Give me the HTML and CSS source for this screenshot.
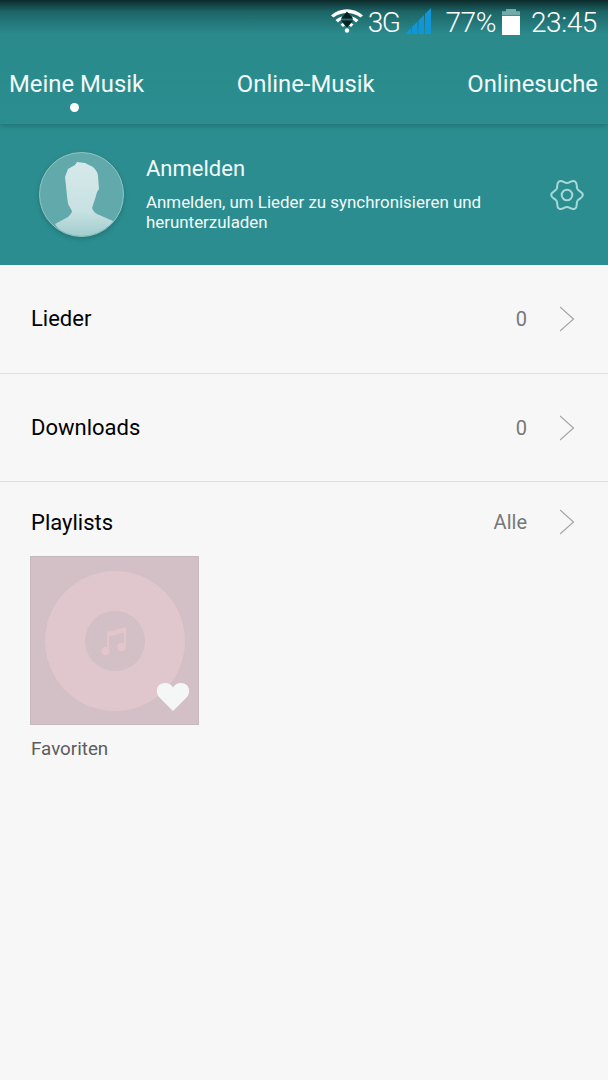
FILE: index.html
```html
<!DOCTYPE html>
<html lang="en">
<head>
    <meta charset="UTF-8">
    <meta name="viewport" content="width=device-width, initial-scale=1.0">
    <title>Meine Musik</title>
    <link rel="stylesheet" href="styles.css">
</head>
<body>
    <div class="app">
        <header class="top">
            <div class="status-bar">
                <svg class="wifi" width="34" height="26" viewBox="0 0 34 26">
                    <path d="M1 6.500 C10 -2 24 -2 33 6.500 L30.500 8.500 C23 2.500 11 2.500 3.500 8.500 Z" fill="#fff"/>
                    <path d="M5.500 11 C8 9 10 8 12 7.500 L11 11 C10 11.500 9 12.500 8 13.500 Z M28.500 11 C26 9 24 8 22 7.500 L23 11 C24 11.500 25 12.500 26 13.500 Z" fill="#fff"/>
                    <path d="M10.500 15.500 C11 15 12 14.500 13 14 L15 16.500 L13 18 Z M23.500 15.500 C23 15 22 14.500 21 14 L19 16.500 L21 18 Z" fill="#fff"/>
                    <circle cx="17" cy="21.500" r="2.200" fill="#fff"/>
                    <path d="M17 2.500 L23 9.500 H11 Z M11 11.500 H23 L17 18.500 Z" fill="#06201f"/>
                </svg>
                <span class="net">3G</span>
                <svg class="signal" width="28" height="28" viewBox="0 0 28 28">
                    <path d="M1 27 L7 21 V27 Z M8 27 V20 L13.500 14.500 V27 Z M14.500 27 V13.500 L20 8 V27 Z M21 27 V7 L27 1 V27 Z" fill="#0f95d8"/>
                </svg>
                <span class="pct">77%</span>
                <div class="battery"><div class="battery-cap"></div><div class="battery-body"></div></div>
                <span class="clock">23:45</span>
            </div>
            <nav class="tabs">
                <div class="tab active">Meine Musik</div>
                <div class="tab">Online-Musik</div>
                <div class="tab">Onlinesuche</div>
            </nav>
        </header>

        <section class="account">
            <div class="avatar">
                <svg width="84" height="84" viewBox="0 0 84 84">
                    <defs>
                        <linearGradient id="figure" x1="0" y1="0" x2="0" y2="1">
                            <stop offset="0" stop-color="#d6e9ea"/>
                            <stop offset="0.65" stop-color="#c8e1e2"/>
                            <stop offset="1" stop-color="#9fcbcc"/>
                        </linearGradient>
                    </defs>
                    <path d="M37 9 L45 10 L53 14 C56 17 58 20 58 23 L59 36 L57 39 C56 43 55 46 54 49 L52 55 C53 58 55 60 57 61 L73 68 L80 72 C72 80 56 85 42 85 C30 85 20 80 15 71 L28 64 C30 62 32 60 32 58 L28 51 L27 43 L26 33 L25 24 L28 16 L35 12 Z" fill="url(#figure)"/>
                </svg>
            </div>
            <div class="account-text">
                <div class="account-title">Anmelden</div>
                <div class="account-desc">Anmelden, um Lieder zu synchronisieren und herunterzuladen</div>
            </div>
            <svg class="gear" width="34" height="34" viewBox="-17 -17 34 34">
                <defs>
                    <path id="lobe" d="M10.390 -6 C11.890 -3.400 15.800 -3.500 15.800 0 C15.800 3.500 11.890 3.400 10.390 6" fill="none" stroke="#a9d8d8" stroke-width="2"/>
                </defs>
                <use href="#lobe"/>
                <use href="#lobe" transform="rotate(60)"/>
                <use href="#lobe" transform="rotate(120)"/>
                <use href="#lobe" transform="rotate(180)"/>
                <use href="#lobe" transform="rotate(240)"/>
                <use href="#lobe" transform="rotate(300)"/>
                <circle cx="0" cy="0" r="5.300" fill="none" stroke="#a9d8d8" stroke-width="2"/>
            </svg>
        </section>

        <main class="list">
            <div class="row row-first row-border">
                <span class="row-title">Lieder</span>
                <span class="row-value">0</span>
                <svg class="chevron" width="16" height="26" viewBox="0 0 16 26"><path d="M0 1 L13.500 13 L0 25" fill="none" stroke="#a8a4a4" stroke-width="1.200"/></svg>
            </div>
            <div class="row row-border">
                <span class="row-title">Downloads</span>
                <span class="row-value">0</span>
                <svg class="chevron" width="16" height="26" viewBox="0 0 16 26"><path d="M0 1 L13.500 13 L0 25" fill="none" stroke="#a8a4a4" stroke-width="1.200"/></svg>
            </div>
            <div class="row row-short">
                <span class="row-title">Playlists</span>
                <span class="row-value">Alle</span>
                <svg class="chevron" width="16" height="26" viewBox="0 0 16 26"><path d="M0 1 L13.500 13 L0 25" fill="none" stroke="#a8a4a4" stroke-width="1.200"/></svg>
            </div>
            <div class="playlist">
                <div class="cover">
                    <div class="disc">
                        <div class="disc-hole">
                            <svg width="60" height="60" viewBox="0 0 60 60">
                                <path d="M22 40 V21 L41 16 V36 H39 V21.500 L24 25.500 V40 Z" fill="#e2c6cc"/>
                                <circle cx="20.500" cy="40" r="4.300" fill="#e2c6cc"/>
                                <circle cx="36.500" cy="36" r="4.300" fill="#e2c6cc"/>
                            </svg>
                        </div>
                    </div>
                    <svg class="heart" width="34" height="30" viewBox="0 0 34 30">
                        <path d="M17 29 L3 15 C-1 10 0.500 1 9 1 C13 1 15.500 3 17 5.500 C18.500 3 21 1 25 1 C33.500 1 35 10 31 15 Z" fill="#f5f6f6"/>
                    </svg>
                </div>
                <div class="cover-label">Favoriten</div>
            </div>
        </main>
    </div>
</body>
</html>
```

FILE: styles.css
```css
* {
    margin: 0;
    padding: 0;
    box-sizing: border-box;
}

body {
    font-family: Roboto, 'Liberation Sans', sans-serif;
    background-color: #f7f7f7;
    color: #000;
}

.app {
    width: 608px;
    height: 1080px;
    overflow: hidden;
}

.top {
    height: 124px;
    background: linear-gradient(#0c2a2b 0, #1d6667 12px, #2a8a8c 34px, #2b8d8f 100%);
    box-shadow: 0 1px 6px rgba(0, 0, 0, 0.25);
    position: relative;
}

.status-bar {
    height: 44px;
    display: flex;
    align-items: center;
    justify-content: flex-end;
    padding-right: 11px;
    color: #fff;
    font-size: 28px;
    font-weight: 300;
    letter-spacing: -0.4px;
}

.wifi {
    margin-right: 4px;
}

.net {
    letter-spacing: -1.500px;
    margin-right: 5px;
}

.signal {
    margin-right: 13px;
    margin-top: -2px;
}

.pct {
    margin-right: 6px;
}

.battery {
    width: 18px;
    height: 26px;
    display: flex;
    flex-direction: column;
    align-items: center;
    margin-right: 11px;
    margin-top: -1px;
}

.battery-cap {
    width: 18px;
    height: 7px;
    background-color: #73aaaa;
    clip-path: polygon(22% 0, 78% 0, 78% 40%, 100% 40%, 100% 100%, 0 100%, 0 40%, 22% 40%);
}

.battery-body {
    width: 18px;
    flex: 1;
    background-color: #fff;
}

.tabs {
    display: flex;
    justify-content: space-between;
    padding: 0 10px 0 9px;
    color: #f2fafa;
    font-size: 23.850px;
    margin-top: 26px;
    line-height: 28px;
}

.tab {
    position: relative;
}

.tab.active::after {
    content: '';
    position: absolute;
    left: 61px;
    top: 33px;
    width: 9px;
    height: 9px;
    border-radius: 50%;
    background-color: #fff;
}

.account {
    height: 141px;
    background-color: #2b8d8f;
    display: flex;
    align-items: center;
    padding-left: 39px;
    padding-right: 24px;
    color: #f2fafa;
}

.avatar {
    width: 85px;
    height: 85px;
    border-radius: 50%;
    background-color: #62a9ab;
    border: 1px solid #95c6c7;
    box-shadow: 0 2px 5px rgba(0, 0, 0, 0.18);
    overflow: hidden;
    flex-shrink: 0;
}

.account-text {
    width: 352px;
    margin-left: 22px;
    margin-top: -1px;
}

.account-title {
    font-size: 22px;
    line-height: 26px;
    margin-bottom: 11px;
}

.account-desc {
    font-size: 16.900px;
    line-height: 19.500px;
}

.gear {
    margin-left: auto;
}

.row {
    display: flex;
    align-items: center;
    padding: 0 32px 0 31px;
    height: 108px;
}

.row-first {
    height: 109px;
}

.row-first .row-title {
    margin-bottom: 2px;
}

.row-border {
    border-bottom: 1px solid #dfdfdf;
}

.row-short {
    height: 80px;
}

.row-title {
    font-size: 22px;
}

.row-value {
    margin-left: auto;
    font-size: 20px;
    color: #777;
    margin-right: 33px;
}

.playlist {
    padding-left: 30px;
    margin-top: -6px;
}

.cover {
    width: 169px;
    height: 169px;
    background-color: #d3bfc6;
    border: 1px solid #c8b9be;
    display: flex;
    align-items: center;
    justify-content: center;
    position: relative;
}

.disc {
    width: 140px;
    height: 140px;
    border-radius: 50%;
    background-color: #e0c6cd;
    display: flex;
    align-items: center;
    justify-content: center;
}

.disc-hole {
    width: 60px;
    height: 60px;
    border-radius: 50%;
    background-color: #d3bfc6;
}

.heart {
    position: absolute;
    right: 8px;
    bottom: 12px;
}

.cover-label {
    font-size: 18.800px;
    color: #5c5c5c;
    margin-top: 13px;
    padding-left: 1px;
}
```
